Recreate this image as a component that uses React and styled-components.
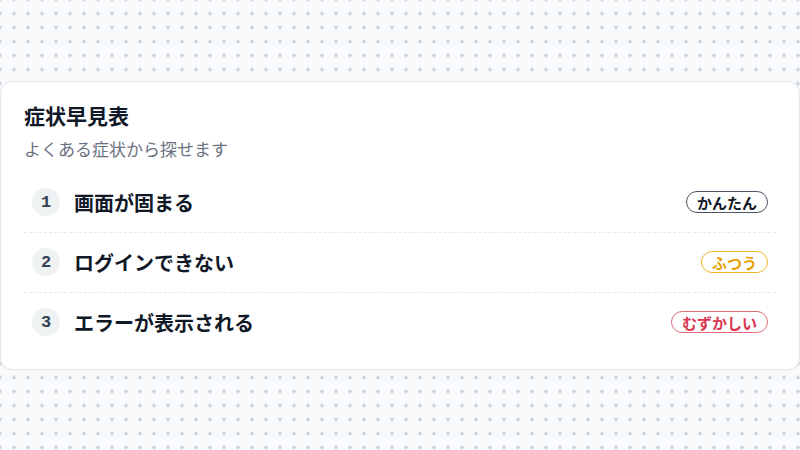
import React from "react";
import styled, { createGlobalStyle } from "styled-components";

const GlobalStyle = createGlobalStyle`
  * { box-sizing: border-box; }
  html, body { margin: 0; padding: 0; }
  body {
    font-family: "Noto Sans CJK JP", "Noto Sans", sans-serif;
    background-color: #f8fafc;
    background-image: radial-gradient(circle, #c5cfdc 1.4px, transparent 1.9px);
    background-size: 14px 14px;
    background-position: -7px 6.5px;
  }
`;

const Page = styled.div`
  min-height: 100vh;
  display: flex;
  align-items: center;
  justify-content: center;
`;

const Card = styled.section`
  width: 800px;
  background: #fff;
  border: 1px solid #e5e7eb;
  border-radius: 12px;
  padding: 19px 23px 17px;
  box-shadow: 0 1px 2px rgba(15, 23, 42, 0.03);
`;

const Title = styled.h2`
  margin: 0;
  font-size: 21px;
  font-weight: 700;
  color: #111827;
  line-height: 28px;
`;

const Sub = styled.p`
  margin: 8px 0 12px;
  font-size: 17px;
  color: #6b7280;
  line-height: 24px;
`;

const List = styled.ol`
  list-style: none;
  margin: 0;
  padding: 0;
`;

const Row = styled.li`
  display: flex;
  align-items: center;
  gap: 14px;
  height: 59px;
  padding: 0 8px;
  & + & {
    height: 60px;
    border-top: 1px dashed #e5e7eb;
  }
`;

const Num = styled.span`
  flex: none;
  width: 28px;
  height: 28px;
  border-radius: 50%;
  background: #eef2f2;
  color: #334155;
  display: grid;
  place-items: center;
  font-family: "Liberation Mono", monospace;
  font-size: 17px;
  font-weight: 700;
`;

const Label = styled.span`
  flex: 1;
  font-size: 20px;
  font-weight: 700;
  color: #111827;
`;

const tones = {
  easy: { line: "#4b5563", ink: "#111827" },
  normal: { line: "#f0b429", ink: "#e6a000" },
  hard: { line: "#e26d7a", ink: "#d9364f" },
};

const Badge = styled.span`
  flex: none;
  height: 22px;
  padding: 0 10px;
  border-radius: 999px;
  border: 1.5px solid ${(p) => tones[p.$tone].line};
  color: ${(p) => tones[p.$tone].ink};
  font-size: 15px;
  font-weight: 700;
  line-height: 19px;
  display: inline-flex;
  align-items: center;
`;

const items = [
  { n: 1, text: "画面が固まる", level: "かんたん", tone: "easy" },
  { n: 2, text: "ログインできない", level: "ふつう", tone: "normal" },
  { n: 3, text: "エラーが表示される", level: "むずかしい", tone: "hard" },
];

export default function App() {
  return (
    <>
      <GlobalStyle />
      <Page>
        <Card>
          <Title>症状早見表</Title>
          <Sub>よくある症状から探せます</Sub>
          <List>
            {items.map((it) => (
              <Row key={it.n}>
                <Num>{it.n}</Num>
                <Label>{it.text}</Label>
                <Badge $tone={it.tone}>{it.level}</Badge>
              </Row>
            ))}
          </List>
        </Card>
      </Page>
    </>
  );
}
